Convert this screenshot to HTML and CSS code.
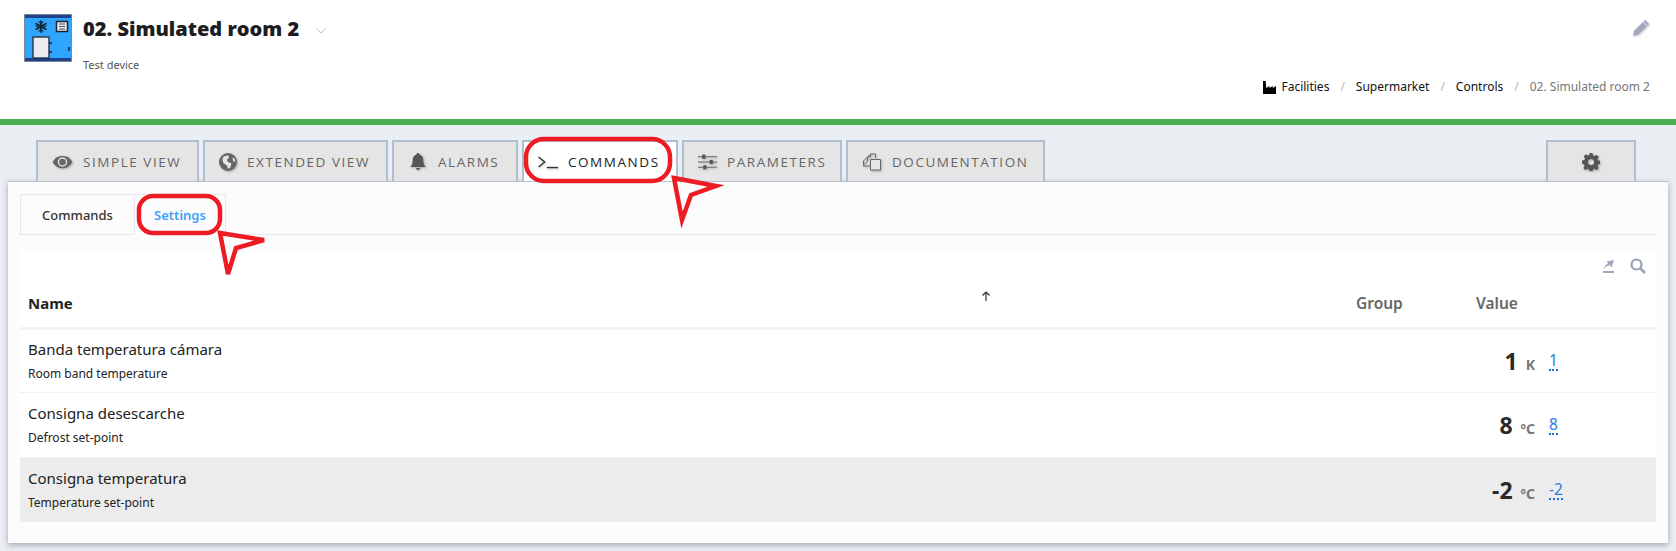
FILE: index.html
```html
<!DOCTYPE html>
<html lang="en">
<head>
    <meta charset="UTF-8">
    <title>02. Simulated room 2</title>
    <link rel="stylesheet" href="styles.css">
</head>
<body>
    <header class="page-head">
        <svg class="device-icon" viewBox="0 0 48 48">
            <rect x="0.5" y="0.5" width="47" height="47" fill="#2ea6ff" stroke="#7d8794"/>
            <rect x="1" y="1" width="46" height="3" fill="#1f3f8f"/>
            <rect x="1" y="44" width="46" height="3" fill="#1f3f8f"/>
            <g stroke="#16202c" stroke-width="1.7" stroke-linecap="round" fill="none">
                <path d="M17 7v11M12.200 9.700l9.600 5.600M12.200 15.300l9.600-5.600"/>
                <path d="M15 7.800l2 1.800 2-1.800M15 17.200l2-1.800 2 1.800M11.800 12l2.700.5M22.200 12l-2.700.5" stroke-width="1.100"/>
            </g>
            <rect x="32.500" y="7.500" width="11" height="10" fill="#e8e8ec" stroke="#1c2430" stroke-width="1.500"/>
            <path d="M35 10h6M35 12.500h6M35 15h6" stroke="#4a5360" stroke-width="1.200"/>
            <rect x="9" y="23" width="16" height="21" fill="#ebebf0" stroke="#2a3340" stroke-width="1.400"/>
            <path d="M25 29h3M25 38h3M45 33v4" stroke="#16202c" stroke-width="1.600"/>
        </svg>
        <div class="head-title">
            <h1>02. Simulated room 2 <svg class="caret" viewBox="0 0 10 6"><path d="M0.500 0.500L5 5l4.500-4.500" fill="none" stroke="#a8c0e8" stroke-width="1"/></svg></h1>
            <p>Test device</p>
        </div>
        <div class="head-right">
            <svg class="pencil" viewBox="0 0 16 16"><path d="M11.500 0.800l3.700 3.700-9.600 9.600-4.800 1.100 1.100-4.800z" fill="#a1a8bd"/><path d="M9.800 2.500l3.700 3.700" stroke="#fff" stroke-width="0.700"/></svg>
            <nav class="crumbs">
                <svg class="factory" viewBox="0 0 12 12"><path d="M0 0h2.500l.5 6.500L6 4.500v2l3-2v2l3-2V12H0z" fill="#000"/></svg>
                <a>Facilities</a><i>/</i><a>Supermarket</a><i>/</i><a>Controls</a><i>/</i><span>02. Simulated room 2</span>
            </nav>
        </div>
    </header>

    <main class="content">
        <div class="tabs">
            <div class="tab tab-simple">
                <svg viewBox="0 0 20 14"><path d="M0.500 7C3 3 6 1 10 1s7 2 9.500 6c-2.500 4-5.500 6-9.500 6S3 11 .5 7z" fill="#666"/><circle cx="10" cy="7" r="4.500" fill="#e5e5e5"/><circle cx="10" cy="7" r="3.200" fill="#666"/></svg>
                Simple view
            </div>
            <div class="tab tab-extended">
                <svg viewBox="0 0 16 16"><circle cx="8" cy="8" r="8" fill="#666"/><path d="M4 3l4-1 1 2-2 2 1 2 3 1-1 4-2 1-1-3-3-2-1-3zM12 4l2 1 .5 3-2-1z" fill="#e5e5e5"/></svg>
                Extended view
            </div>
            <div class="tab tab-alarms">
                <svg viewBox="0 0 16 18"><path d="M8 0a1.300 1.300 0 0 1 1.300 1.600C12 2.200 13.300 4.500 13.300 7c0 4 1 5.500 2.500 7H.2c1.500-1.500 2.500-3 2.500-7 0-2.500 1.300-4.800 4-5.400A1.300 1.300 0 0 1 8 0zM6 15h4a2 2 0 0 1-4 0z" fill="#555"/></svg>
                Alarms
            </div>
            <div class="tab tab-commands active">
                <svg viewBox="0 0 18 12"><path d="M0.500 1.500L6 6 .5 10.500" fill="none" stroke="#333" stroke-width="1.300"/><path d="M8 11h10" stroke="#333" stroke-width="1.300"/></svg>
                Commands
            </div>
            <div class="tab tab-parameters">
                <svg viewBox="0 0 18 16"><path d="M0 3h18M0 8h18M0 13h18" stroke="#666" stroke-width="1"/><rect x="4" y="1" width="3" height="4" fill="#555"/><rect x="11" y="6" width="3" height="4" fill="#555"/><rect x="5" y="11" width="3" height="4" fill="#555"/></svg>
                Parameters
            </div>
            <div class="tab tab-docs">
                <svg viewBox="0 0 19 18"><path d="M5 8V4l3-3h5v4M5 8l-4 4v-4l4-4M8 1v3H5" fill="none" stroke="#666" stroke-width="1"/><path d="M8 6.500h10V17H8z" fill="#e5e5e5" stroke="#666" stroke-width="1"/><path d="M1 8v5h7" fill="none" stroke="#666" stroke-width="1"/></svg>
                Documentation
            </div>
            <div class="tab tab-gear">
                <svg viewBox="0 0 16 16"><path fill="#555" fill-rule="evenodd" d="M6.600 0h2.800l.4 2.100 1.300.6 1.800-1.200 2 2-1.200 1.800.6 1.300 2.100.4v2.800l-2.100.4-.6 1.300 1.200 1.800-2 2-1.800-1.200-1.300.6-.4 2.100H6.600l-.4-2.100-1.300-.6-1.800 1.200-2-2 1.200-1.800-.6-1.300L0 9.400V6.600l2.100-.4.6-1.300-1.200-1.800 2-2 1.800 1.200 1.300-.6zM8 5.300a2.700 2.700 0 1 0 0 5.400 2.700 2.700 0 0 0 0-5.400z"/></svg>
            </div>
        </div>

        <section class="card">
            <div class="subtabs">
                <div class="subtab">Commands</div>
                <div class="subtab selected">Settings</div>
            </div>

            <div class="table-wrap">
                <div class="tools">
                    <svg class="tool-export" viewBox="0 0 12 13"><path d="M1 11h11v2H1z" fill="#a1a8bd"/><path d="M12 0L4.500 1.500l1.700 1.700C3.800 4.200 2.500 6 2 9c1.500-2 3.200-3 5.700-3.700L9.500 7.500z" fill="#a1a8bd"/></svg>
                    <svg class="tool-search" viewBox="0 0 16 16"><circle cx="6.500" cy="6.500" r="5" fill="none" stroke="#97a0b5" stroke-width="2.200"/><path d="M10.300 10.300L15 15" stroke="#97a0b5" stroke-width="2.600"/></svg>
                </div>
                <table>
                    <thead>
                        <tr>
                            <th class="col-name">Name <svg class="sort" viewBox="0 0 10 10"><path d="M5 10V1M1.500 4.500L5 1l3.500 3.500" fill="none" stroke="#333" stroke-width="1.200"/></svg></th>
                            <th class="col-group">Group</th>
                            <th class="col-value">Value</th>
                        </tr>
                    </thead>
                    <tbody>
                        <tr>
                            <td><div class="row-name">Banda temperatura cámara</div><div class="row-desc">Room band temperature</div></td>
                            <td></td>
                            <td><div class="reading"><span class="num">1<small>K</small></span><a class="edit">1</a></div></td>
                        </tr>
                        <tr>
                            <td><div class="row-name">Consigna desescarche</div><div class="row-desc">Defrost set-point</div></td>
                            <td></td>
                            <td><div class="reading"><span class="num">8<small>ºC</small></span><a class="edit">8</a></div></td>
                        </tr>
                        <tr class="hover">
                            <td><div class="row-name">Consigna temperatura</div><div class="row-desc">Temperature set-point</div></td>
                            <td></td>
                            <td><div class="reading"><span class="num">-2<small>ºC</small></span><a class="edit">-2</a></div></td>
                        </tr>
                    </tbody>
                </table>
            </div>
        </section>
    </main>

    <!-- red marks drawn on top of the screenshot -->
    <svg class="marks" viewBox="0 0 1676 551">
        <g fill="none" stroke="#ed1c24" stroke-width="4.500">
            <rect x="526" y="139" width="144" height="42" rx="18"/>
            <rect x="139" y="196" width="81" height="37" rx="14"/>
            <path d="M220 233L264 240 236 248 228 274z"/>
            <path d="M674 178L716 186 691 195 682 220z"/>
        </g>
    </svg>
</body>
</html>
```

FILE: styles.css
```css
* {
    margin: 0;
    padding: 0;
    box-sizing: border-box;
}

body {
    position: relative;
    height: 551px;
    overflow: hidden;
    background: #ebeef3;
    font-family: "Noto Sans", "Open Sans", sans-serif;
    color: #222;
}

/* page header */
.page-head {
    display: flex;
    height: 125px;
    padding: 14px 26px 0 24px;
    background: #fff;
    border-bottom: 6px solid #4caf50;
}

.device-icon {
    width: 48px;
    height: 48px;
    flex: none;
}

.head-title {
    margin-left: 11px;
    flex: 1;
}

.head-title h1 {
    margin-top: 1px;
    font-size: 20px;
    line-height: 28px;
    font-weight: 800;
    font-family: "Open Sans", sans-serif;
    color: #1c1c22;
}

.caret {
    width: 10px;
    height: 6px;
    margin-left: 12px;
    vertical-align: 2px;
}

.head-title p {
    margin-top: 14px;
    font-size: 11px;
    line-height: 15px;
    color: #555;
}

.head-right {
    display: flex;
    flex-direction: column;
    align-items: flex-end;
}

.pencil {
    width: 18px;
    height: 18px;
    margin-top: 5px;
    filter: drop-shadow(1px 1px 1px rgba(0,0,0,0.2));
}

.crumbs {
    display: flex;
    align-items: center;
    margin-top: 42px;
    font-size: 12px;
    line-height: 16px;
    color: #111;
}

.crumbs i {
    margin: 0 11px;
    font-style: normal;
    color: #bbb;
}

.crumbs span {
    color: #777;
}

.factory {
    width: 13px;
    height: 13px;
    margin-right: 5px;
}

/* main tabs */
.content {
    padding: 15px 8px 0;
}

.tabs {
    display: flex;
    height: 41px;
    padding-left: 28px;
    gap: 4px;
}

.tab {
    display: flex;
    align-items: center;
    gap: 10px;
    padding-left: 14px;
    height: 41px;
    background: #e5e5e5;
    border: 2px solid #aebfd1;
    border-bottom: 0;
    font-family: "Open Sans", sans-serif;
    font-size: 13.5px;
    font-weight: 400;
    letter-spacing: 1.55px;
    text-transform: uppercase;
    color: #666;
}

.tab svg {
    width: 18px;
    height: 18px;
    flex: none;
    filter: drop-shadow(1px 1px 1px rgba(0,0,0,0.25));
}

.tab-simple svg { width: 21px; }
.tab-alarms svg { width: 20px; }
.tab-commands svg { width: 20px; }
.tab-parameters svg { width: 19px; }
.tab-docs svg { width: 20px; }

.tab-simple { width: 163px; }
.tab-extended { width: 185px; }
.tab-alarms { width: 126px; }
.tab-commands { width: 156px; }
.tab-parameters { width: 160px; }
.tab-docs { width: 199px; }

.tab-gear {
    width: 90px;
    margin-left: auto;
    margin-right: 32px;
    padding-left: 0;
    justify-content: center;
}

.tab.active {
    background: #fff;
    color: #222;
}

/* card */
.card {
    height: 362px;
    padding: 12px 12px 0;
    background: #fcfcfc;
    border-top: 1px solid #b4c2d2;
    box-shadow: 0 2px 6px rgba(70,80,100,0.45);
}

.subtabs {
    display: flex;
    height: 41px;
    border-bottom: 1px solid #e4e6f0;
}

.subtab {
    height: 41px;
    padding: 0 20px;
    border: 1px solid #e4e6f0;
    font-size: 13px;
    line-height: 41px;
    font-weight: 500;
    color: #333;
}

.subtab:first-child {
    width: 114px;
    text-align: center;
    border-right: 0;
}

.subtab.selected {
    width: 92px;
    padding: 0;
    text-align: center;
    border-bottom-color: #fcfcfc;
    color: #3fa0ff;
    font-weight: 600;
}

/* table */
.table-wrap {
    margin-top: 15px;
    background: #fff;
}

.tools {
    display: flex;
    justify-content: flex-end;
    align-items: center;
    gap: 16px;
    height: 32px;
    padding: 0 10px 0 0;
}

.tool-export {
    width: 12px;
    height: 13px;
}

.tool-search {
    width: 16px;
    height: 16px;
}

table {
    width: 100%;
    border-collapse: collapse;
    table-layout: fixed;
}

th {
    position: relative;
    height: 46px;
    padding: 0 0 3px 8px;
    text-align: left;
    font-size: 15px;
    font-weight: 700;
    color: #222;
    border-bottom: 3px solid #f3f3f4;
}

.col-group,
.col-value {
    color: #666;
    font-weight: 600;
    font-size: 15.5px;
}

.col-group { width: 120px; }
.col-value { width: 188px; }

.sort {
    position: absolute;
    left: 961px;
    top: 9px;
    width: 10px;
    height: 10px;
}

td {
    height: 64.67px;
    padding: 0 0 0 8px;
    border-bottom: 1px solid #f0f0f2;
}

tr.hover td {
    background: #ececed;
    border-bottom: 0;
}

.row-name {
    font-size: 15px;
    line-height: 20px;
    color: #222;
}

.row-desc {
    margin-top: 6px;
    font-size: 12px;
    line-height: 17px;
    color: #222;
}

.reading {
    display: flex;
    align-items: center;
}

.num {
    width: 59px;
    text-align: right;
    font-size: 23px;
    font-weight: 700;
    color: #2a2a2a;
}

.num small {
    margin-left: 8px;
    font-size: 14px;
    font-weight: 700;
    color: #777;
}

.edit {
    margin-left: 14px;
    font-size: 15.5px;
    line-height: 18px;
    color: #2a7de1;
    border-bottom: 2px dotted #1a6fd8;
}

.marks {
    position: absolute;
    left: 0;
    top: 0;
    width: 1676px;
    height: 551px;
    pointer-events: none;
}
```
